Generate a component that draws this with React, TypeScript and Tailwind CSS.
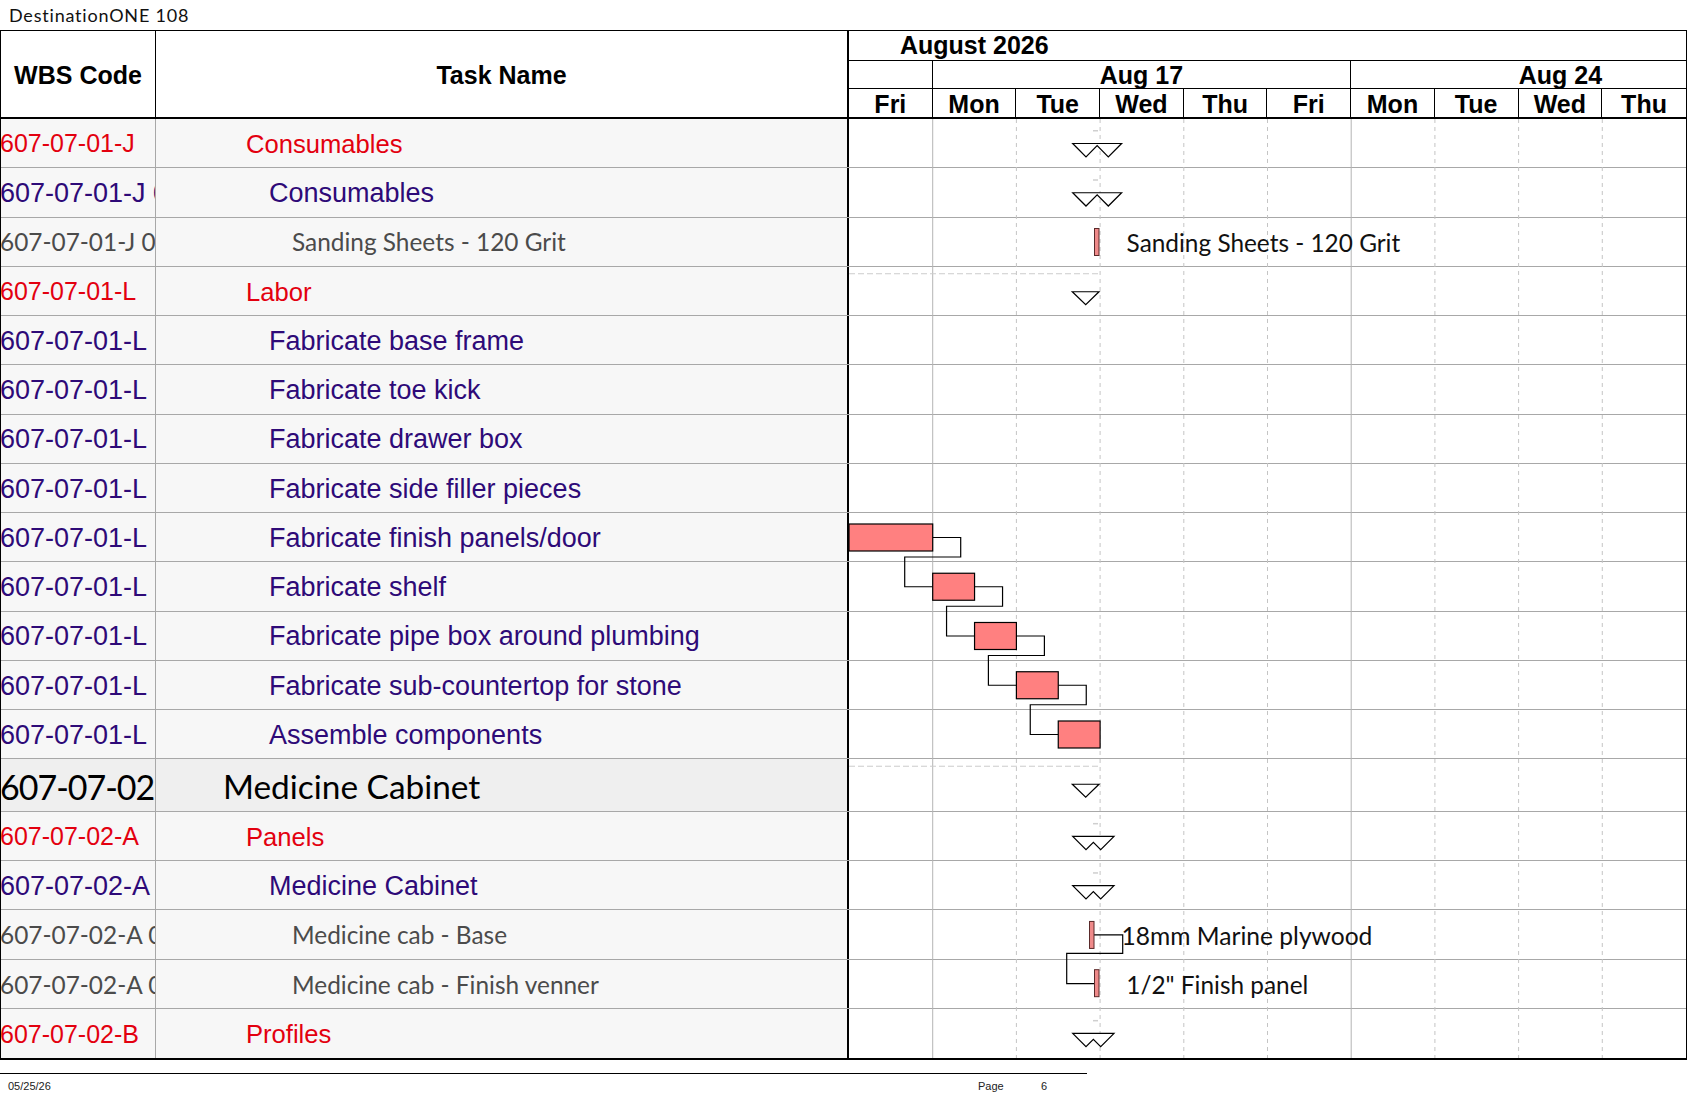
import React from 'react';

const DAY = 83.7;
const H = 49.25;
const HB = 52.7;

type Row = { wbs: string; name: string; lvl: 0 | 1 | 2 | 3 };

const rows: Row[] = [
  { wbs: '607-07-01-J', name: 'Consumables', lvl: 1 },
  { wbs: '607-07-01-J 01', name: 'Consumables', lvl: 2 },
  { wbs: '607-07-01-J 01.01', name: 'Sanding Sheets - 120 Grit', lvl: 3 },
  { wbs: '607-07-01-L', name: 'Labor', lvl: 1 },
  { wbs: '607-07-01-L', name: 'Fabricate base frame', lvl: 2 },
  { wbs: '607-07-01-L', name: 'Fabricate toe kick', lvl: 2 },
  { wbs: '607-07-01-L', name: 'Fabricate drawer box', lvl: 2 },
  { wbs: '607-07-01-L', name: 'Fabricate side filler pieces', lvl: 2 },
  { wbs: '607-07-01-L', name: 'Fabricate finish panels/door', lvl: 2 },
  { wbs: '607-07-01-L', name: 'Fabricate shelf', lvl: 2 },
  { wbs: '607-07-01-L', name: 'Fabricate pipe box around plumbing', lvl: 2 },
  { wbs: '607-07-01-L', name: 'Fabricate sub-countertop for stone', lvl: 2 },
  { wbs: '607-07-01-L', name: 'Assemble components', lvl: 2 },
  { wbs: '607-07-02', name: 'Medicine Cabinet', lvl: 0 },
  { wbs: '607-07-02-A', name: 'Panels', lvl: 1 },
  { wbs: '607-07-02-A', name: 'Medicine Cabinet', lvl: 2 },
  { wbs: '607-07-02-A 01', name: 'Medicine cab - Base', lvl: 3 },
  { wbs: '607-07-02-A 02', name: 'Medicine cab - Finish venner', lvl: 3 },
  { wbs: '607-07-02-B', name: 'Profiles', lvl: 1 },
];

const wbsCls = {
  0: "font-['Lato',sans-serif] text-[34px] tracking-[-1px] text-black",
  1: "font-['Liberation_Sans',Arial,sans-serif] text-[25px] text-[#e3000f]",
  2: "font-['Liberation_Sans',Arial,sans-serif] text-[27px] text-[#2e0a78]",
  3: "font-['Lato',sans-serif] text-[24.4px] text-[#4b4b4b]",
};

const nameCls = {
  0: "pl-[67px] font-['Lato',sans-serif] text-[33.4px] text-black",
  1: "pl-[90px] font-['Liberation_Sans',Arial,sans-serif] text-[25.6px] text-[#e3000f]",
  2: "pl-[113px] font-['Liberation_Sans',Arial,sans-serif] text-[27px] text-[#2e0a78]",
  3: "pl-[136px] font-['Lato',sans-serif] text-[24.4px] text-[#4b4b4b]",
};

const rowTop = (k: number) => (k <= 13 ? k * H : 13 * H + HB + (k - 14) * H);
const bodyH = 18 * H + HB;

const days = ['Fri', 'Mon', 'Tue', 'Wed', 'Thu', 'Fri', 'Mon', 'Tue', 'Wed', 'Thu'];

// summary markers: [row, apex of 2nd triangle]
const doubles: [number, number][] = [
  [0, 259.3],
  [1, 259.3],
  [14, 251.7],
  [15, 251.7],
  [18, 251.7],
];
const singles = [3, 13];
const bars: [number, number, number][] = [
  [8, 0, 1],
  [9, 1, 1.5],
  [10, 1.5, 2],
  [11, 2, 2.5],
  [12, 2.5, 3],
];

function Chart() {
  const s = 13.3;
  return (
    <svg
      className="absolute top-0 left-[848px] pointer-events-none"
      width={837}
      height={bodyH}
      viewBox={`0 0 837 ${bodyH}`}
    >
      {[1, 2, 3, 4, 5, 6, 7, 8, 9].map((i) =>
        i === 1 || i === 6 ? (
          <line key={i} x1={i * DAY} x2={i * DAY} y1={0} y2={bodyH} stroke="#b4b4b4" strokeWidth={1} />
        ) : (
          <line key={i} x1={i * DAY} x2={i * DAY} y1={0} y2={bodyH} stroke="#c4c4c4" strokeWidth={1} strokeDasharray="4 4" />
        )
      )}

      {singles.map((k) => {
        const t = rowTop(k) + 25;
        return (
          <g key={k}>
            <line x1={0} x2={250} y1={rowTop(k) + 7} y2={rowTop(k) + 7} stroke="#cccccc" strokeDasharray="6 3" />
            <polygon points={`223.3,${t} 250,${t} 236.7,${t + 13}`} fill="white" stroke="black" strokeWidth={1.2} />
          </g>
        );
      })}

      {doubles.map(([k, a2]) => {
        const a1 = 237;
        const t = rowTop(k) + 24.5;
        const pts = [
          [a1 - s, t],
          [a2 + s, t],
          [a2, t + s],
          [(a1 + a2) / 2, t + s - (a2 - a1) / 2],
          [a1, t + s],
        ]
          .map((p) => p.join(','))
          .join(' ');
        return (
          <g key={k}>
            <rect x={244} y={rowTop(k) + 11} width={5} height={1.5} fill="#cfcfcf" />
            <polygon points={pts} fill="white" stroke="black" strokeWidth={1.2} />
          </g>
        );
      })}

      {bars.map(([k, d0, d1], i) => {
        const next = bars[i + 1];
        const xr = d1 * DAY;
        const ym = rowTop(k) + 24.5;
        return (
          <g key={k}>
            {next && (
              <path
                d={`M ${xr} ${ym} H ${xr + 28} V ${rowTop(k) + 44} H ${next[1] * DAY - 28} V ${rowTop(next[0]) + 24.5} H ${next[1] * DAY}`}
                fill="none"
                stroke="black"
                strokeWidth={1.2}
              />
            )}
            <rect x={d0 * DAY} y={rowTop(k) + 11} width={(d1 - d0) * DAY} height={27} fill="#ff8080" stroke="black" strokeWidth={1.2} />
          </g>
        );
      })}

      {/* Sanding sheets */}
      <rect x={245.5} y={rowTop(2) + 11} width={4.5} height={27} fill="#ef8a8a" stroke="#5a2a2a" strokeWidth={1} />
      <text x={277.6} y={rowTop(2) + 25} dominantBaseline="central" fontFamily="Lato, sans-serif" fontSize={24.4} fill="#111">
        Sanding Sheets - 120 Grit
      </text>

      {/* Medicine cab base -> finish */}
      <path
        d={`M 245 ${rowTop(16) + 24.5} H 273.7 V ${rowTop(16) + 43} H 217.7 V ${rowTop(17) + 24} H 245.5`}
        fill="none"
        stroke="black"
        strokeWidth={1.2}
      />
      <rect x={240.5} y={rowTop(16) + 11} width={4.5} height={27} fill="#ef8a8a" stroke="#5a2a2a" strokeWidth={1} />
      <text x={272.6} y={rowTop(16) + 25} dominantBaseline="central" fontFamily="Lato, sans-serif" fontSize={24.6} fill="#111">
        18mm Marine plywood
      </text>
      <rect x={245.5} y={rowTop(17) + 10} width={4.5} height={27} fill="#ef8a8a" stroke="#5a2a2a" strokeWidth={1} />
      <text x={277.3} y={rowTop(17) + 24.5} dominantBaseline="central" fontFamily="Lato, sans-serif" fontSize={24.4} fill="#111">
        1/2" Finish panel
      </text>
    </svg>
  );
}

export default function App() {
  return (
    <div className="w-[1687px] h-[1097px] bg-white overflow-hidden">
      <div className="h-[30px] pl-[9px] flex items-center font-['Lato',sans-serif] text-[18px] tracking-[0.8px] text-[#111]">
        DestinationONE 108
      </div>

      <div className="border-t border-l border-r border-b-2 border-black">
        {/* header */}
        <div className="flex h-[88px] border-b-2 border-black font-['Liberation_Sans',Arial,sans-serif] font-bold text-[25px] leading-none text-black">
          <div className="w-[155px] shrink-0 border-r border-black flex items-center justify-center pt-[2px]">WBS Code</div>
          <div className="w-[693px] shrink-0 border-r-2 border-black flex items-center justify-center pt-[2px]">Task Name</div>
          <div className="flex-1 flex flex-col overflow-hidden">
            <div className="h-[30px] border-b border-black flex items-center pl-[51px]">August 2026</div>
            <div className="h-[28px] border-b border-black flex">
              <div className="w-[83.7px] shrink-0 border-r border-black" />
              <div className="w-[418.5px] shrink-0 border-r border-black flex items-center justify-center pt-[1px]">Aug 17</div>
              <div className="w-[418.5px] shrink-0 flex items-center justify-center pt-[1px]">Aug 24</div>
            </div>
            <div className="h-[28px] flex">
              {days.map((d, i) => (
                <div
                  key={i}
                  className={`w-[83.7px] shrink-0 flex items-center justify-center pt-[3px] ${i < 9 ? 'border-r border-black' : ''}`}
                >
                  {d}
                </div>
              ))}
            </div>
          </div>
        </div>

        {/* body */}
        <div className="relative">
          {rows.map((r, k) => (
            <div
              key={k}
              className={`flex ${k === 13 ? 'h-[52.7px]' : 'h-[49.25px]'} ${k < rows.length - 1 ? 'border-b border-[#a8a8a8]' : ''}`}
            >
              <div
                className={`w-[155px] shrink-0 border-r border-[#a8a8a8] overflow-hidden whitespace-nowrap flex items-center pt-[2px] ${
                  k === 13 ? 'bg-[#efefef]' : 'bg-[#f7f7f7]'
                } ${wbsCls[r.lvl]}`}
              >
                <span className="-ml-px">{r.wbs}</span>
              </div>
              <div
                className={`w-[693px] shrink-0 border-r-2 border-black overflow-hidden whitespace-nowrap flex items-center pt-[2px] ${
                  k === 13 ? 'bg-[#efefef]' : 'bg-[#f7f7f7]'
                } ${nameCls[r.lvl]}`}
              >
                {r.name}
              </div>
              <div className="flex-1 bg-white" />
            </div>
          ))}
          <Chart />
        </div>
      </div>

      {/* footer */}
      <div className="mt-[13px] w-[1087px] border-t border-black flex items-center h-[26px] font-['Liberation_Sans',Arial,sans-serif] text-[11px] text-[#222]">
        <span className="w-[978px] pl-[8px]">05/25/26</span>
        <span className="w-[63px]">Page</span>
        <span>6</span>
      </div>
    </div>
  );
}
